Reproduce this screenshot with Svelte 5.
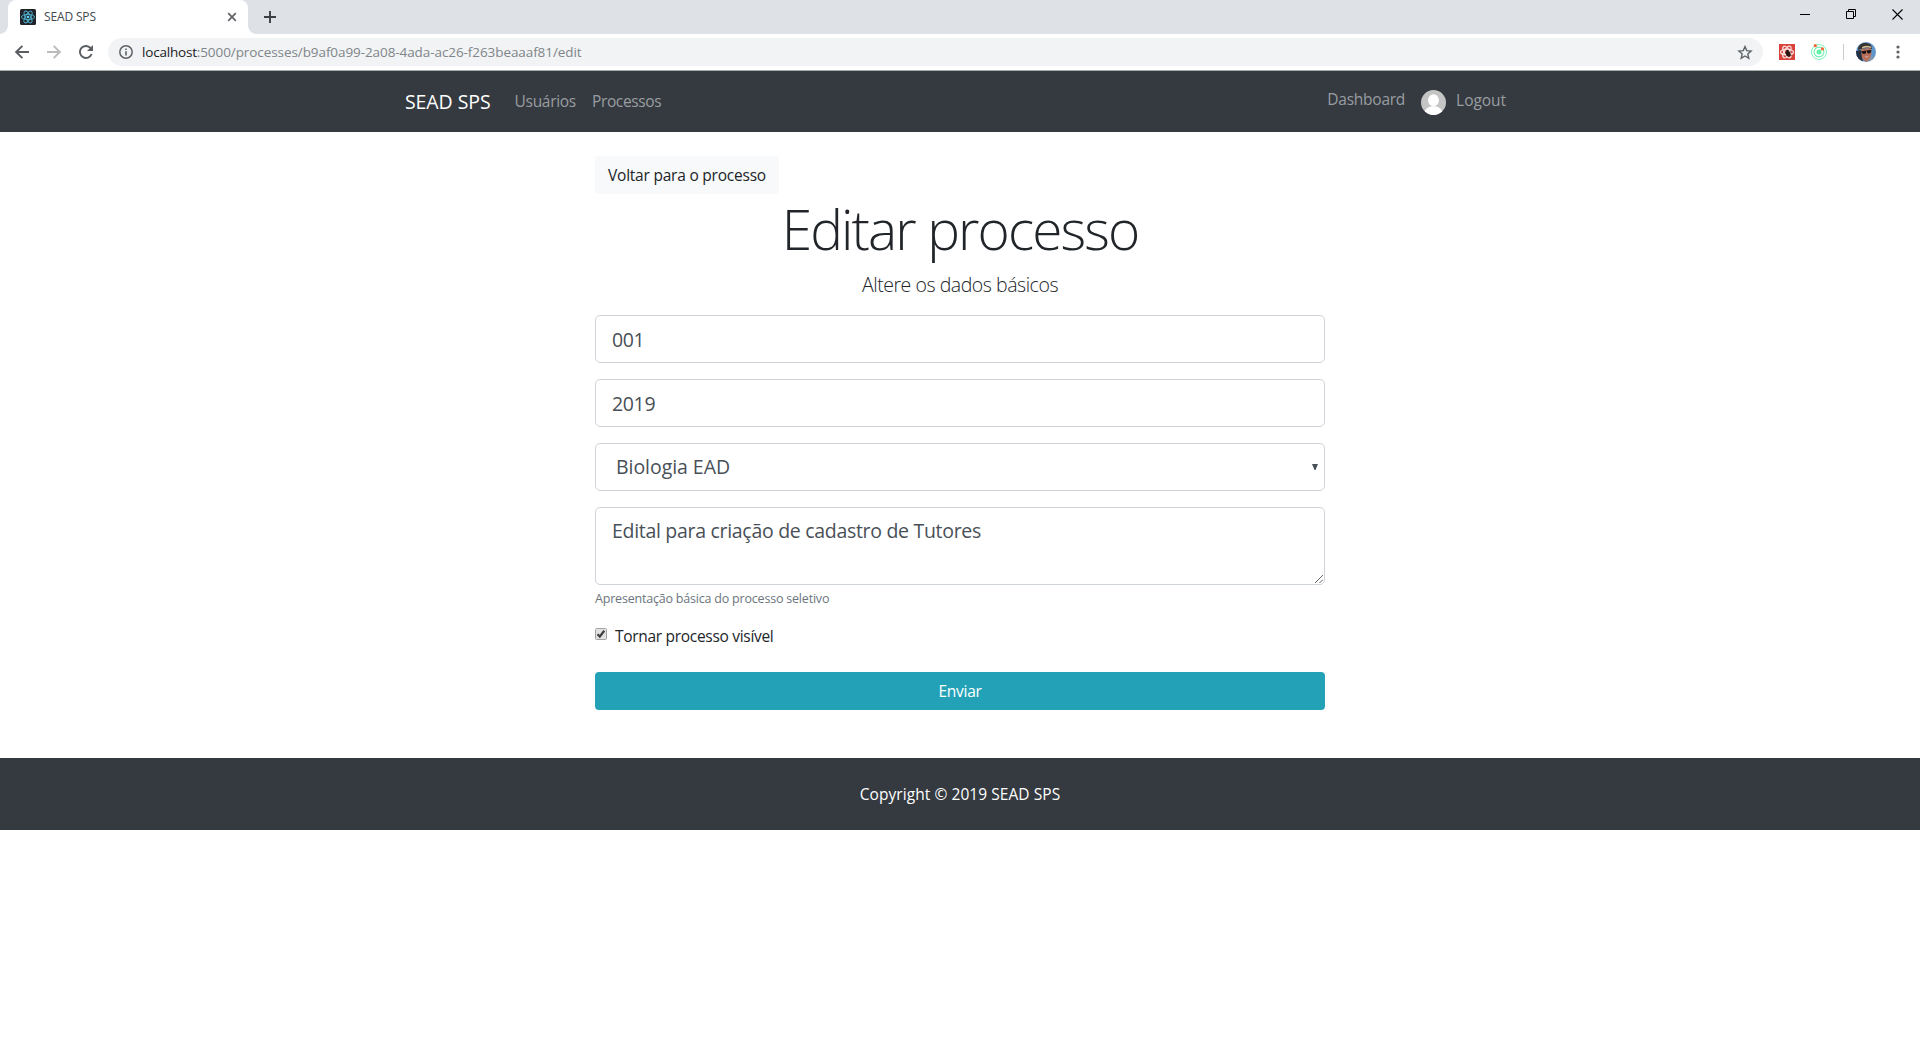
<script>
  let code = $state('001');
  let year = $state('2019');
  let description = $state('Edital para criação de cadastro de Tutores');
</script>

<div class="browser">
  <div class="tabs">
    <div class="tab">
      <svg class="favicon" width="16" height="16" viewBox="0 0 16 16">
        <rect width="16" height="16" rx="1.5" fill="#20232a" />
        <g fill="none" stroke="#4fb3cf" stroke-width=".9">
          <ellipse cx="8" cy="8" rx="6.6" ry="2.6" />
          <ellipse cx="8" cy="8" rx="6.6" ry="2.6" transform="rotate(60 8 8)" />
          <ellipse cx="8" cy="8" rx="6.6" ry="2.6" transform="rotate(120 8 8)" />
        </g>
        <circle cx="8" cy="8" r="1.3" fill="#61dafb" />
      </svg>
      <span class="tab-title">SEAD SPS</span>
      <svg class="tab-close" width="10" height="10" viewBox="0 0 10 10"><path d="M1.2 1.2l7.6 7.6M8.8 1.2L1.2 8.8" stroke="#5f6368" stroke-width="1.7" /></svg>
    </div>
    <svg class="new-tab" width="12" height="12" viewBox="0 0 12 12"><path d="M6 0v12M0 6h12" stroke="#3c4043" stroke-width="1.9" /></svg>
    <div class="window-buttons">
      <svg width="10" height="11" viewBox="0 0 10 11"><path d="M0 5.5h10" stroke="#000" /></svg>
      <svg width="10" height="10" viewBox="0 0 10 10"><path d="M.5 2.5h7v7h-7zM2.5 2V.5h7v7H8" fill="none" stroke="#000" /></svg>
      <svg width="11" height="11" viewBox="0 0 11 11"><path d="M.5.5l10 10M10.5.5l-10 10" stroke="#000" stroke-width="1.1" /></svg>
    </div>
  </div>

  <div class="toolbar">
    <svg class="back" width="14" height="14" viewBox="0 0 14 14"><path d="M14 7H1.5M7.4.8L1.2 7l6.2 6.2" fill="none" stroke="#5a5e63" stroke-width="1.9" /></svg>
    <svg class="forward" width="14" height="14" viewBox="0 0 14 14"><path d="M0 7h12.5M6.6.8L12.8 7l-6.2 6.2" fill="none" stroke="#babcbe" stroke-width="1.9" /></svg>
    <svg class="reload" width="14" height="14" viewBox="0 0 14 14"><path d="M12.6 9A6 6 0 1 1 11.4 2.9L12 3.5" fill="none" stroke="#5a5e63" stroke-width="1.9" /><path d="M14 0v6H8z" fill="#5a5e63" /></svg>
    <div class="address">
      <svg width="14" height="14" viewBox="0 0 14 14"><circle cx="7" cy="7" r="6.2" fill="none" stroke="#5f6368" stroke-width="1.5" /><path d="M7 6.2v4.3M7 3.4V5" stroke="#5f6368" stroke-width="1.6" /></svg>
      <span class="url"><b>localhost</b>:5000/processes/b9af0a99-2a08-4ada-ac26-f263beaaaf81/edit</span>
      <svg width="16" height="15" viewBox="0 0 16 15"><path d="M8 1.6l1.75 4.05 4.35.4-3.3 2.9 1 4.3L8 11l-3.8 2.25 1-4.3-3.3-2.9 4.35-.4z" fill="none" stroke="#5f6368" stroke-width="1.4" /></svg>
    </div>
    <svg class="ext-one" width="16" height="16" viewBox="0 0 16 16">
      <rect width="16" height="16" fill="#d9423c" />
      <g fill="none" stroke="#f7dcda" stroke-width="1.4">
        <ellipse cx="8" cy="8" rx="6.5" ry="2.8" />
        <ellipse cx="8" cy="8" rx="6.5" ry="2.8" transform="rotate(60 8 8)" />
        <ellipse cx="8" cy="8" rx="6.5" ry="2.8" transform="rotate(120 8 8)" />
      </g>
      <ellipse cx="9.2" cy="9.8" rx="2.2" ry="3.1" transform="rotate(-25 9.2 9.8)" fill="#2b1512" />
      <circle cx="8.5" cy="7" r="1.3" fill="#2b1512" />
      <path d="M6 8.5l6.5 3M6.5 12l5.500-4.500" stroke="#2b1512" stroke-width=".7" />
    </svg>
    <svg class="ext-two" width="16" height="16" viewBox="0 0 16 16">
      <g fill="none" stroke="#6df0b0">
        <circle cx="8" cy="8" r="7.5" stroke-width=".9" />
        <circle cx="8" cy="8" r="4.9" stroke-width="1.1" />
      </g>
      <circle cx="8" cy="8" r="2.5" fill="#5df2a4" />
      <circle cx="4.3" cy="1.7" r="1.6" fill="#ee6a35" />
      <circle cx="11.5" cy="4.9" r="1.6" fill="#ee6a35" />
    </svg>
    <span class="divider"></span>
    <svg class="profile" width="20" height="20" viewBox="0 0 20 20">
      <defs><clipPath id="face"><circle cx="10" cy="10" r="10" /></clipPath></defs>
      <g clip-path="url(#face)">
        <rect width="20" height="20" fill="#5d97cb" />
        <path d="M0 9l5-1 2 12H0z" fill="#273043" />
        <path d="M12 13l8 3v4h-9z" fill="#8297ad" />
        <path d="M5 7l10-1 .5 6-2.5 6-3.5 2L6 16z" fill="#b9705b" />
        <path d="M2 8C2 3 6 .5 10 1c4 .3 6 2 6 6-4-2-9-1-14 1z" fill="#38332d" />
        <path d="M6 5c3-1.500 6-1.500 9-.5l.5 1.500C12 5 9 5.300 6 6.500z" fill="#c9b99b" />
        <path d="M5 9.500l5-1v2.800c-2 1.200-4 .7-5-1.800zM10.500 8.600l4.800-.6c.2 2-.8 3.300-2.500 3.500-1.300 0-2.200-1-2.300-2.900z" fill="#171416" />
        <path d="M8.500 14.800l4-.4-1.500 1.200z" fill="#f0d5c8" />
      </g>
    </svg>
    <svg class="menu" width="4" height="14" viewBox="0 0 4 14" fill="#5f6368"><circle cx="2" cy="2" r="1.6" /><circle cx="2" cy="7" r="1.6" /><circle cx="2" cy="12" r="1.6" /></svg>
  </div>
</div>

<nav class="navbar">
  <div class="container">
    <a class="brand" href="#home">SEAD SPS</a>
    <a class="link users" href="#users">Usuários</a>
    <a class="link processes" href="#processes">Processos</a>
    <div class="account">
      <a class="link dashboard" href="#dashboard">Dashboard</a>
      <svg class="avatar" width="25" height="25" viewBox="0 0 25 25">
        <defs><clipPath id="disc"><circle cx="12.5" cy="12.5" r="12.5" /></clipPath></defs>
        <g clip-path="url(#disc)">
          <rect width="25" height="25" fill="#c5c5c5" />
          <ellipse cx="12.5" cy="10.3" rx="5.4" ry="6" fill="#fff" />
          <path d="M3.5 22c1-3.3 4-5 7-5.8h4c3 .8 6 2.5 7 5.8v4h-18z" fill="#fff" />
        </g>
      </svg>
      <a class="link logout" href="#logout">Logout</a>
    </div>
  </div>
</nav>

<main>
  <a class="btn-light" href="#process">Voltar para o processo</a>
  <h1>Editar processo</h1>
  <p class="lead">Altere os dados básicos</p>
  <form>
    <input class="control digits" type="text" bind:value={code} />
    <input class="control digits" type="text" bind:value={year} />
    <div class="field">
      <select class="control course">
        <option>Biologia EAD</option>
      </select>
      <svg class="caret" width="6" height="6" viewBox="0 0 6 6"><path d="M0 0h6L3.500 6h-1z" fill="#495057" /></svg>
    </div>
    <div class="field">
      <textarea class="control area" bind:value={description}></textarea>
      <svg class="grip" width="8" height="8" viewBox="0 0 8 8"><path d="M0 8l8-8M4.5 8L8 4.5" stroke="#555" stroke-width=".9" /></svg>
    </div>
    <small>Apresentação básica do processo seletivo</small>
    <label>
      <svg width="12" height="12" viewBox="0 0 12 12">
        <rect x=".5" y=".5" width="11" height="11" rx="1" fill="#e2e2e2" stroke="#a3a3a3" />
        <path d="M2.5 6.2l2.3 2.3L9.3 2.8" fill="none" stroke="#404040" stroke-width="2.2" />
      </svg>
      Tornar processo visível
    </label>
    <button type="button">Enviar</button>
  </form>
</main>

<footer>Copyright © 2019 SEAD SPS</footer>

<style>
  :global(body) {
    margin: 0;
    background: #fff;
    color: #212529;
    font: 15.5px/24px "Open Sans", "Noto Sans", sans-serif;
  }
  a { text-decoration: none; }
  svg { display: block; flex: none; }

  .browser { height: 70px; border-bottom: 1px solid #a9adaa; background: #fff; }
  .tabs { display: flex; height: 34px; background: #dee1e6; padding-left: 8px; }
  .tab {
    position: relative;
    box-sizing: border-box;
    display: flex;
    align-items: center;
    width: 240px;
    padding: 0 11px 0 12px;
    border-radius: 8px 8px 0 0;
    background: #fff;
  }
  .tab::before, .tab::after {
    content: "";
    position: absolute;
    bottom: 0;
    width: 8px;
    height: 8px;
  }
  .tab::before { left: -8px; background: radial-gradient(circle at 0 0, #dee1e6 7.5px, #fff 8px); }
  .tab::after { right: -8px; background: radial-gradient(circle at 100% 0, #dee1e6 7.5px, #fff 8px); }
  .favicon { margin-right: 8px; }
  .tab-title { flex: 1; font-size: 12px; letter-spacing: -.15px; line-height: 34px; padding-bottom: 1px; color: #45494d; }
  .new-tab { margin: 11px 0 0 16px; }
  .window-buttons { display: flex; gap: 36px; align-items: center; height: 28px; margin-left: auto; padding-right: 17px; }

  .toolbar { display: flex; align-items: center; height: 36px; }
  .back { margin-left: 15px; }
  .forward { margin-left: 18px; }
  .reload { margin-left: 18px; }
  .address {
    box-sizing: border-box;
    display: flex;
    align-items: center;
    flex: 1;
    height: 28px;
    margin-left: 15px;
    padding: 0 10px 0 11px;
    border-radius: 14px;
    background: #f1f3f4;
  }
  .url { flex: 1; margin-left: 9px; font-size: 13.5px; letter-spacing: -.08px; color: #80868b; }
  .url b { font-weight: 400; color: #202124; letter-spacing: -.2px; }
  .ext-one { margin-left: 16px; }
  .ext-two { margin-left: 16px; }
  .divider { width: 1px; height: 16px; margin: 0 12px 0 16px; background: #c8cacc; }
  .menu { margin: 0 20px 0 20px; }

  .navbar { height: 61px; background: #343a40; }
  .container { display: flex; align-items: center; width: 1110px; height: 100%; margin: 0 auto; }
  .brand { color: #fff; font-size: 19.5px; letter-spacing: -.08px; }
  .link { color: #9a9da0; }
  .users { margin-left: 24px; padding-bottom: 1px; letter-spacing: -.3px; }
  .processes { margin-left: 16px; padding-bottom: 1px; letter-spacing: -.35px; }
  .account { display: flex; align-items: center; margin-left: auto; padding-right: 9px; }
  .dashboard { padding-bottom: 6px; letter-spacing: -.25px; }
  .avatar { margin: 2px 10px 0 16px; }
  .logout { padding-bottom: 3px; letter-spacing: -.05px; }

  main { width: 730px; margin: 24px auto 48px; }
  .btn-light {
    display: block;
    box-sizing: border-box;
    width: 184px;
    padding: 7px 13px;
    border-radius: 4px;
    background: #f8f9fa;
    color: #212529;
    letter-spacing: -.22px;
    white-space: nowrap;
  }
  h1 { margin: 0 0 7px; text-align: center; font-size: 55px; font-weight: 300; line-height: 69px; letter-spacing: -1.9px; }
  .lead { margin: 0 0 15px; text-align: center; font-size: 19.5px; font-weight: 300; line-height: 30px; letter-spacing: -.46px; }
  form { display: flex; flex-direction: column; }
  .control {
    box-sizing: border-box;
    display: block;
    width: 100%;
    height: 48px;
    margin: 0 0 16px;
    padding: 8px 16px;
    border: 1px solid #ced4da;
    border-radius: 5px;
    outline: 0;
    background: #fff;
    color: #495057;
    font: 19.5px/30px "Open Sans", "Noto Sans", sans-serif;
    letter-spacing: -.3px;
  }
  .digits { letter-spacing: -.35px; }
  .course { appearance: none; padding-left: 20px; letter-spacing: -.05px; }
  .area { height: 78px; margin: 0; resize: none; overflow: hidden; }
  .field { position: relative; }
  .caret { position: absolute; right: 7px; top: 21px; }
  .grip { position: absolute; right: 2px; bottom: 2px; }
  small { margin-top: 4px; font-size: 12.5px; line-height: 19px; letter-spacing: -.2px; color: #6c757d; }
  label { display: flex; align-items: center; gap: 8px; margin: 16px 0 24px; letter-spacing: -.3px; }
  label svg { margin-top: -4px; }
  button {
    height: 38px;
    padding: 0;
    border: 0;
    border-radius: 4px;
    background: #23a2b7;
    color: #fff;
    font: 15.5px/24px "Open Sans", "Noto Sans", sans-serif;
    letter-spacing: -.25px;
  }
  footer { height: 72px; line-height: 72px; background: #343a40; color: #fff; text-align: center; letter-spacing: .06px; }
</style>
